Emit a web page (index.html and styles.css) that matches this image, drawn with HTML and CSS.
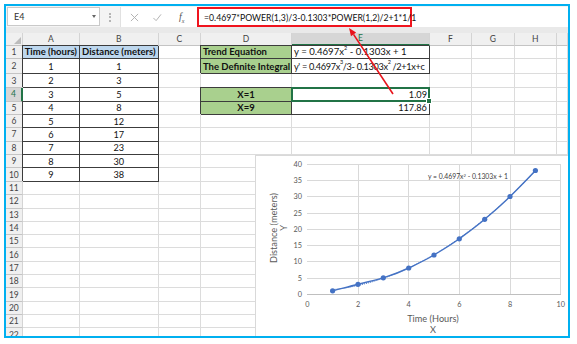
FILE: index.html
```html
<!DOCTYPE html>
<html lang="en">
<head>
    <meta charset="UTF-8">
    <meta name="viewport" content="width=device-width, initial-scale=1.0">
    <title>Definite Integral</title>
    <link rel="stylesheet" href="styles.css">
</head>
<body>
    <div class="frame">

        <!-- Formula bar -->
        <div class="fbar">
            <div class="namebox"><span>E4</span><span class="drop"></span></div>
            <div class="grip"><span></span></div>
            <div class="tools">
                <svg class="ico" viewBox="0 0 10 10" width="9" height="9"><path d="M1 1 L9 9 M9 1 L1 9" stroke="#b3b3b3" stroke-width="1.1" fill="none"/></svg>
                <svg class="ico" viewBox="0 0 10 10" width="10" height="9"><path d="M1 5.5 L4 8.5 L9.5 1.5" stroke="#b3b3b3" stroke-width="1.1" fill="none"/></svg>
                <span class="fx">f<sub>x</sub></span>
            </div>
            <div class="formula">
                <span class="hl">=0.4697*POWER(1,3)/3-0.1303*POWER(1,2)/2+1*1/1</span>
            </div>
        </div>

        <!-- Sheet grid -->
        <div class="sheet">
            <div class="hd corner"><span class="tri"></span></div>
            <div class="hd">A</div><div class="hd">B</div><div class="hd">C</div><div class="hd">D</div>
            <div class="hd on">E</div><div class="hd">F</div><div class="hd">G</div><div class="hd">H</div><div class="hd"></div>

            <div class="rn">1</div>
            <div class="c bd blue b ctr">Time (hours)</div>
            <div class="c bd blue b ctr">Distance (meters)</div>
            <div class="c"></div>
            <div class="c bd green b">Trend Equation</div>
            <div class="c bd wide"><span>y = 0.4697x<sup>2</sup> - 0.1303x + 1</span></div>
            <div class="c"></div><div class="c"></div><div class="c"></div><div class="c"></div>

            <div class="rn">2</div>
            <div class="c bd ctr">1</div>
            <div class="c bd ctr">1</div>
            <div class="c"></div>
            <div class="c bd green b">The Definite Integral</div>
            <div class="c bd tight"><span>y' = 0.4697x<sup>3</sup>/3- 0.1303x<sup>2</sup> /2+1x+c</span></div>
            <div class="c"></div><div class="c"></div><div class="c"></div><div class="c"></div>

            <div class="rn">3</div>
            <div class="c bd ctr">2</div>
            <div class="c bd ctr">3</div>
            <div class="c"></div><div class="c"></div><div class="c"></div>
            <div class="c"></div><div class="c"></div><div class="c"></div><div class="c"></div>

            <div class="rn on">4</div>
            <div class="c bd ctr notop">3</div>
            <div class="c bd ctr">5</div>
            <div class="c"></div>
            <div class="c bd green b ctr">X=1</div>
            <div class="c bd rt sel">1.09</div>
            <div class="c"></div><div class="c"></div><div class="c"></div><div class="c"></div>

            <div class="rn">5</div>
            <div class="c bd ctr">4</div>
            <div class="c bd ctr">8</div>
            <div class="c"></div>
            <div class="c bd green b ctr">X=9</div>
            <div class="c bd rt">117.86</div>
            <div class="c"></div><div class="c"></div><div class="c"></div><div class="c"></div>

            <div class="rn">6</div>
            <div class="c bd ctr">5</div><div class="c bd ctr">12</div>
            <div class="c"></div><div class="c"></div><div class="c"></div>
            <div class="c"></div><div class="c"></div><div class="c"></div><div class="c"></div>

            <div class="rn">7</div>
            <div class="c bd ctr">6</div><div class="c bd ctr">17</div>
            <div class="c"></div><div class="c"></div><div class="c"></div>
            <div class="c"></div><div class="c"></div><div class="c"></div><div class="c"></div>

            <div class="rn">8</div>
            <div class="c bd ctr">7</div><div class="c bd ctr">23</div>
            <div class="c"></div><div class="c"></div><div class="c"></div>
            <div class="c"></div><div class="c"></div><div class="c"></div><div class="c"></div>

            <div class="rn">9</div>
            <div class="c bd ctr">8</div><div class="c bd ctr">30</div>
            <div class="c"></div><div class="c"></div><div class="c"></div>
            <div class="c"></div><div class="c"></div><div class="c"></div><div class="c"></div>

            <div class="rn">10</div>
            <div class="c bd ctr">9</div><div class="c bd ctr">38</div>
            <div class="c"></div><div class="c"></div><div class="c"></div>
            <div class="c"></div><div class="c"></div><div class="c"></div><div class="c"></div>

            <div class="rn">11</div><div class="c"></div><div class="c"></div><div class="c"></div><div class="c"></div><div class="c"></div><div class="c"></div><div class="c"></div><div class="c"></div><div class="c"></div>
            <div class="rn">12</div><div class="c"></div><div class="c"></div><div class="c"></div><div class="c"></div><div class="c"></div><div class="c"></div><div class="c"></div><div class="c"></div><div class="c"></div>
            <div class="rn">13</div><div class="c"></div><div class="c"></div><div class="c"></div><div class="c"></div><div class="c"></div><div class="c"></div><div class="c"></div><div class="c"></div><div class="c"></div>
            <div class="rn">14</div><div class="c"></div><div class="c"></div><div class="c"></div><div class="c"></div><div class="c"></div><div class="c"></div><div class="c"></div><div class="c"></div><div class="c"></div>
            <div class="rn">15</div><div class="c"></div><div class="c"></div><div class="c"></div><div class="c"></div><div class="c"></div><div class="c"></div><div class="c"></div><div class="c"></div><div class="c"></div>
            <div class="rn">16</div><div class="c"></div><div class="c"></div><div class="c"></div><div class="c"></div><div class="c"></div><div class="c"></div><div class="c"></div><div class="c"></div><div class="c"></div>
            <div class="rn">17</div><div class="c"></div><div class="c"></div><div class="c"></div><div class="c"></div><div class="c"></div><div class="c"></div><div class="c"></div><div class="c"></div><div class="c"></div>
            <div class="rn">18</div><div class="c"></div><div class="c"></div><div class="c"></div><div class="c"></div><div class="c"></div><div class="c"></div><div class="c"></div><div class="c"></div><div class="c"></div>
            <div class="rn">19</div><div class="c"></div><div class="c"></div><div class="c"></div><div class="c"></div><div class="c"></div><div class="c"></div><div class="c"></div><div class="c"></div><div class="c"></div>
            <div class="rn">20</div><div class="c"></div><div class="c"></div><div class="c"></div><div class="c"></div><div class="c"></div><div class="c"></div><div class="c"></div><div class="c"></div><div class="c"></div>
            <div class="rn">21</div><div class="c"></div><div class="c"></div><div class="c"></div><div class="c"></div><div class="c"></div><div class="c"></div><div class="c"></div><div class="c"></div><div class="c"></div>
            <div class="rn">22</div><div class="c"></div><div class="c"></div><div class="c"></div><div class="c"></div><div class="c"></div><div class="c"></div><div class="c"></div><div class="c"></div><div class="c"></div>
        </div>

        <!-- Scatter chart floating over the sheet -->
        <svg class="chart" viewBox="255 155 320 190" width="320" height="190">
            <rect x="255.5" y="155.5" width="330" height="200" fill="#ffffff" stroke="#d9d9d9"/>
            <g stroke="#d9d9d9" stroke-width="1">
                <line x1="307" y1="164.5" x2="561" y2="164.5"/>
                <line x1="307" y1="180.5" x2="561" y2="180.5"/>
                <line x1="307" y1="196.5" x2="561" y2="196.5"/>
                <line x1="307" y1="213.5" x2="561" y2="213.5"/>
                <line x1="307" y1="229.5" x2="561" y2="229.5"/>
                <line x1="307" y1="245.5" x2="561" y2="245.5"/>
                <line x1="307" y1="261.5" x2="561" y2="261.5"/>
                <line x1="307" y1="278.5" x2="561" y2="278.5"/>
                <line x1="358.5" y1="164" x2="358.5" y2="294"/>
                <line x1="408.5" y1="164" x2="408.5" y2="294"/>
                <line x1="459.5" y1="164" x2="459.5" y2="294"/>
                <line x1="510.5" y1="164" x2="510.5" y2="294"/>
                <line x1="560.5" y1="164" x2="560.5" y2="294"/>
            </g>
            <line x1="307" y1="294.5" x2="561" y2="294.5" stroke="#bfbfbf"/>

            <g class="tick" text-anchor="end">
                <text x="302" y="166.5">40</text>
                <text x="302" y="182.5">35</text>
                <text x="302" y="198.5">30</text>
                <text x="302" y="215.5">25</text>
                <text x="302" y="231.5">20</text>
                <text x="302" y="247.5">15</text>
                <text x="302" y="263.5">10</text>
                <text x="302" y="280.5">5</text>
                <text x="302" y="296.5">0</text>
            </g>
            <g class="tick" text-anchor="middle">
                <text x="307.3" y="306.5">0</text>
                <text x="358" y="306.5">2</text>
                <text x="408.7" y="306.5">4</text>
                <text x="459.3" y="306.5">6</text>
                <text x="510" y="306.5">8</text>
                <text x="560.7" y="306.5">10</text>
            </g>

            <text class="title" x="433" y="321.5" text-anchor="middle">Time (Hours)</text>
            <text class="title" x="433" y="332.5" text-anchor="middle">X</text>
            <text class="title" transform="translate(276.5 228) rotate(-90)" text-anchor="middle">Distance (meters)</text>
            <text class="title" transform="translate(286.5 228) rotate(-90)" text-anchor="middle">Y</text>

            <text class="trend" x="428" y="178.5">y = 0.4697x<tspan dy="-2" font-size="4.2">2</tspan><tspan dy="2"> - 0.1303x + 1</tspan></text>

            <!-- trendline -->
            <polyline fill="none" stroke="#4472c4" stroke-width="1" stroke-dasharray="1 1"
                points="332.6,289.7 345.3,288 358,285.5 370.7,282.3 383.3,278.3 396,273.5 408.7,268 421.3,261.7 434,254.7 446.7,246.9 459.3,238.3 472,229 484.7,218.9 497.4,208.1 510,196.4 522.7,184.1 535.4,170.9"/>
            <!-- data series -->
            <path fill="none" stroke="#4472c4" stroke-width="1.4"
                d="M332.6,290.8 C341,288.6 349.6,286.6 358,284.3 C366.5,282 374.9,280.4 383.3,277.8 C391.8,275.2 400.3,272.1 408.7,268 C417.2,263.9 425.6,260.1 434,255 C442.5,249.9 450.9,245 459.3,238.8 C467.8,232.6 476.3,226.6 484.7,219.3 C493.2,212 501.6,205 510,196.5 C518.5,188 527,179.8 535.4,170.5"/>
            <g fill="#4472c4">
                <circle cx="332.6" cy="290.8" r="2.6"/>
                <circle cx="358" cy="284.3" r="2.6"/>
                <circle cx="383.3" cy="277.8" r="2.6"/>
                <circle cx="408.7" cy="268" r="2.6"/>
                <circle cx="434" cy="255" r="2.6"/>
                <circle cx="459.3" cy="238.8" r="2.6"/>
                <circle cx="484.7" cy="219.3" r="2.6"/>
                <circle cx="510" cy="196.5" r="2.6"/>
                <circle cx="535.4" cy="170.5" r="2.6"/>
            </g>
        </svg>

        <!-- Red call-out arrow -->
        <svg class="arrow" viewBox="6 6 562 330" width="562" height="330">
            <line x1="393" y1="94" x2="353.5" y2="34.4" stroke="#e8141b" stroke-width="1.6"/>
            <polygon points="349,28 356.1,32.6 351,36.2" fill="#e8141b"/>
        </svg>
    </div>
</body>
</html>
```

FILE: styles.css
```css
body {
    margin: 0;
    background-color: #ffffff;
    font-family: Lato, "Liberation Sans", sans-serif;
    color: #111;
}

.frame {
    position: relative;
    width: 562px;
    height: 330px;
    margin: 4px;
    border: 2px solid #00b0f0;
    overflow: hidden;
    background-color: #e9e9e9;
}

/* Formula bar */
.fbar {
    display: flex;
    height: 20px;
    padding-top: 1px;
    margin-bottom: 6px;
    background-color: #f4f4f4;
}

.namebox {
    display: flex;
    align-items: center;
    justify-content: space-between;
    box-sizing: border-box;
    width: 93px;
    height: 19px;
    margin-left: 1px;
    padding: 0 3px 0 6px;
    background-color: #fff;
    border: 1px solid #c9c9c9;
    font-size: 9px;
    color: #333;
}

.drop {
    width: 0;
    height: 0;
    border-left: 2.5px solid transparent;
    border-right: 2.5px solid transparent;
    border-top: 3px solid #666;
}

.grip {
    display: flex;
    align-items: center;
    justify-content: center;
    width: 20px;
}

.grip span {
    height: 9px;
    border-left: 2px dotted #b5b5b5;
}

.tools {
    display: flex;
    align-items: center;
    box-sizing: border-box;
    width: 75px;
    height: 20px;
    padding-left: 9px;
    gap: 13px;
    background-color: #fff;
    border-left: 1px solid #e1e1e1;
}

.fx {
    font-family: "Liberation Serif", serif;
    font-style: italic;
    font-size: 10px;
    color: #555;
    margin-left: 4px;
}

.fx sub {
    font-size: 6px;
}

.formula {
    flex: 1;
    height: 20px;
    padding-left: 2px;
    background-color: #fff;
}

.hl {
    display: flex;
    align-items: center;
    box-sizing: border-box;
    width: 215px;
    height: 20px;
    padding-left: 5px;
    border: 2px solid #f0141e;
    font-size: 8.7px;
    color: #111;
    white-space: nowrap;
}

/* Sheet */
.sheet {
    display: grid;
    grid-template-columns: 16.7px 57.3px 78.7px 42.3px 91px 138px 41.7px 43.3px 41.7px 1fr;
    grid-template-rows: 12.5px 13.5px 15px 14px 13.5px repeat(6, 13.4px) repeat(12, 13.33px);
    background-color: #fff;
    font-size: 9.2px;
}

.hd, .rn {
    display: flex;
    align-items: center;
    justify-content: center;
    box-sizing: border-box;
    background-color: #f0f0f0;
    color: #444;
    font-size: 8.5px;
    border-right: 1px solid #d4d4d4;
    border-bottom: 1px solid #c4c4c4;
}

.hd.on, .rn.on {
    background-color: #d6d6d6;
    color: #217346;
}

.hd.on {
    border-bottom: 2px solid #217346;
}

.rn.on {
    border-right: 2px solid #217346;
}

.corner {
    justify-content: flex-end;
    align-items: flex-end;
    padding: 0 1px 1px 0;
}

.tri {
    width: 0;
    height: 0;
    border-left: 7px solid transparent;
    border-bottom: 7px solid #bcbcbc;
}

.c {
    display: flex;
    align-items: center;
    box-sizing: border-box;
    padding: 0 2px;
    white-space: nowrap;
    border-right: 1px solid #dcdcdc;
    border-bottom: 1px solid #dcdcdc;
}

.c sup {
    font-size: 5.5px;
    line-height: 0;
    position: relative;
    top: -1px;
}

.wide {
    font-size: 9.6px;
}

.tight {
    letter-spacing: -0.34px;
}

.bd {
    border-right-color: #3c3c3c;
    border-bottom-color: #3c3c3c;
    box-shadow: -1px -1px 0 #3c3c3c;
}

.bd.notop {
    box-shadow: 0 -1px 0 #3c3c3c;
}

.blue {
    background-color: #bdd7ee;
}

.green {
    background-color: #a9d08e;
}

.b {
    font-weight: bold;
    font-size: 9.5px;
}

.ctr {
    justify-content: center;
}

.rt {
    justify-content: flex-end;
}

.sel {
    position: relative;
}

.sel::after {
    content: "";
    position: absolute;
    left: -1px;
    top: -1px;
    right: -1px;
    bottom: -1px;
    border: 2px solid #217346;
}

.sel::before {
    content: "";
    position: absolute;
    right: -3px;
    bottom: -3px;
    width: 4px;
    height: 4px;
    background-color: #217346;
    border: 1px solid #fff;
    z-index: 1;
}

/* Chart and call-out */
.chart {
    position: absolute;
    left: 249px;
    top: 149px;
}

.chart text {
    font-family: Lato, "Liberation Sans", sans-serif;
    fill: #595959;
}

.tick {
    font-size: 7.3px;
}

.title {
    font-size: 9.2px;
}

.chart .trend {
    font-size: 6.8px;
    fill: #404040;
}

.arrow {
    position: absolute;
    left: 0;
    top: 0;
    pointer-events: none;
}
```
